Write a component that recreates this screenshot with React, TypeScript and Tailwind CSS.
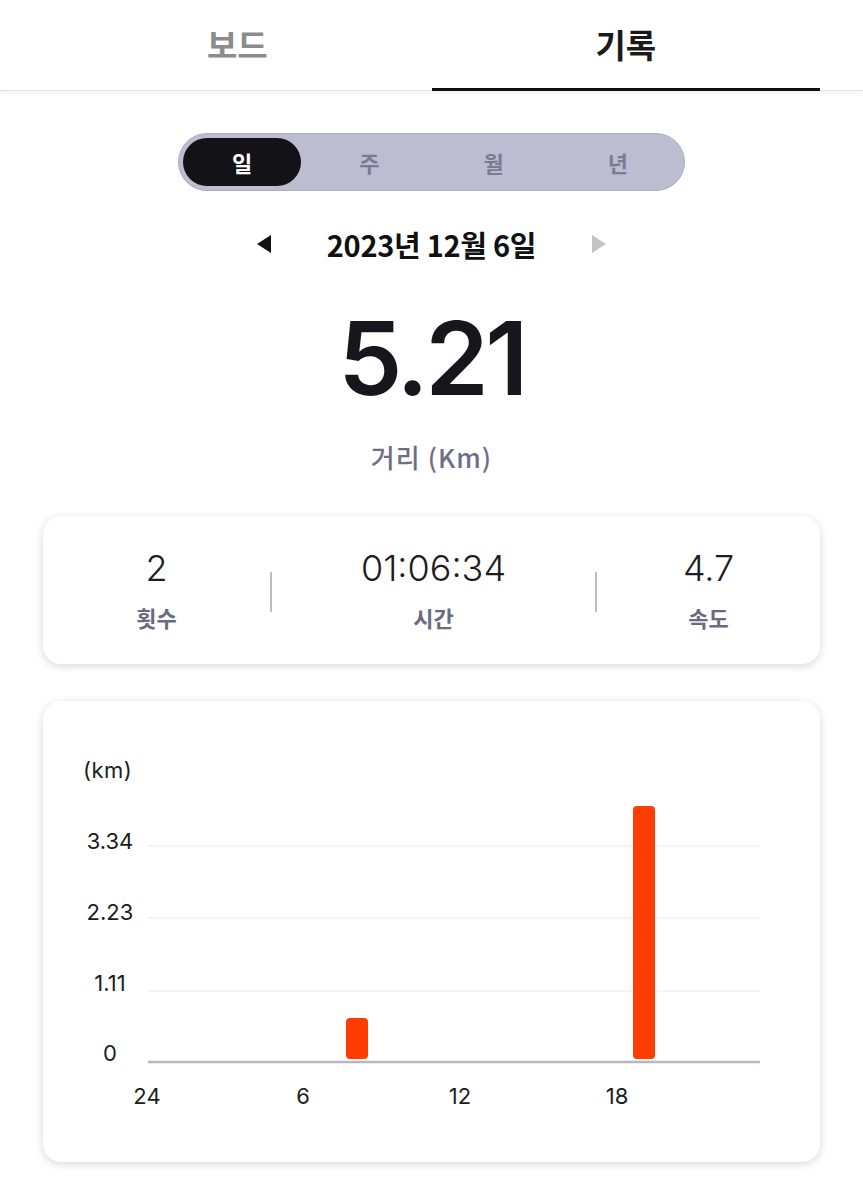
import React, { useState } from 'react';

const KR = { fontFamily: '"Noto Sans CJK KR", "Noto Sans", sans-serif' };

const periods = ['일', '주', '월', '년'];

const yTicks = [
  { label: '3.34', line: 145, base: 148 },
  { label: '2.23', line: 217, base: 219 },
  { label: '1.11', line: 290, base: 290 },
];

const xTicks = [
  { label: '24', x: 104 },
  { label: '6', x: 260 },
  { label: '12', x: 417 },
  { label: '18', x: 574 },
];

// bars: x offset within the card, top y (bottom sits on the baseline)
const bars = [
  { x: 303, top: 317 },
  { x: 590, top: 105 },
];

function Chart() {
  return (
    <svg width="777" height="461" viewBox="0 0 777 461" className="block">
      <text x="40" y="77" fontSize="22" fill="#1c1c22" fontFamily="Inter, sans-serif" letterSpacing="0.5">
        (km)
      </text>
      {yTicks.map((t) => (
        <g key={t.label}>
          <text x="67" y={t.base} textAnchor="middle" fontSize="22" fill="#1c1c22" fontFamily="Inter, sans-serif">
            {t.label}
          </text>
          <line x1="105" x2="717" y1={t.line} y2={t.line} stroke="#efeff2" strokeWidth="1.5" />
        </g>
      ))}
      <text x="67" y="360" textAnchor="middle" fontSize="22" fill="#1c1c22" fontFamily="Inter, sans-serif">
        0
      </text>
      {bars.map((b) => (
        <rect key={b.x} x={b.x} y={b.top} width="22" height={358 - b.top} rx="4" fill="#ff3d00" />
      ))}
      <line x1="105" x2="717" y1="361" y2="361" stroke="#b6b6c4" strokeWidth="2.5" />
      {xTicks.map((t) => (
        <text key={t.label} x={t.x} y="403" textAnchor="middle" fontSize="22" fill="#1c1c22" fontFamily="Inter, sans-serif">
          {t.label}
        </text>
      ))}
    </svg>
  );
}

function Stat({ value, label }: { value: string; label: string }) {
  return (
    <div className="flex flex-col items-center gap-[14px]">
      <span className="text-[36px] leading-[40px] font-light text-[#1c1c22]" style={{ fontFamily: 'Inter, sans-serif' }}>
        {value}
      </span>
      <span className="text-[22px] leading-[30px] font-bold text-[#6b6b80]" style={KR}>
        {label}
      </span>
    </div>
  );
}

export default function App() {
  const [tab, setTab] = useState(1);
  const [period, setPeriod] = useState(0);

  return (
    <div className="min-h-[1200px] w-[863px] bg-white flex flex-col" style={KR}>
      {/* Top tabs */}
      <div className="h-[91px] border-b border-[#e4e4e4] shadow-[0_2px_4px_rgba(0,0,0,0.05)] px-[43px] grid grid-cols-2">
        {['보드', '기록'].map((t, i) => (
          <button
            key={t}
            onClick={() => setTab(i)}
            className={`flex items-center justify-center pt-[2px] text-[33px] font-bold border-b-[3px] -mb-[1px] ${
              tab === i ? 'border-[#111111] text-[#1a1a1a]' : 'border-transparent text-[#8c8c8c]'
            }`}
          >
            {t}
          </button>
        ))}
      </div>

      {/* Period segmented control */}
      <div className="mt-[42px] mx-auto w-[507px] h-[58px] rounded-full bg-[#bdbdd1] border border-[#aeaec3] p-[4px] grid grid-cols-4">
        {periods.map((p, i) => (
          <button key={p} onClick={() => setPeriod(i)} className="flex items-center">
            {period === i ? (
              <span className="w-[118px] h-full rounded-full bg-[#121217] text-white text-[22px] font-bold flex items-center justify-center">
                {p}
              </span>
            ) : (
              <span className="w-full text-[22px] font-bold text-[#7b7b93] text-center">{p}</span>
            )}
          </button>
        ))}
      </div>

      {/* Date navigator */}
      <div className="mt-[35px] h-[36px] flex items-center justify-center gap-[55px]">
        <svg width="16" height="20" viewBox="0 0 16 20">
          <path d="M15 1 L1 10 L15 19 Z" fill="#111111" />
        </svg>
        <span className="text-[29px] leading-[36px] font-bold text-[#111111] tracking-[-0.01em]">2023년 12월 6일</span>
        <svg width="16" height="20" viewBox="0 0 16 20">
          <path d="M1 1 L15 10 L1 19 Z" fill="#c4c4c4" />
        </svg>
      </div>

      {/* Distance */}
      <div
        className="mt-[45px] text-center text-[102px] leading-none font-semibold text-[#16161c] tracking-[-0.035em]"
        style={{ fontFamily: 'Inter, sans-serif' }}
      >
        5.21
      </div>
      <div className="mt-[30px] text-center text-[26px] leading-[36px] font-medium text-[#6e6e86] tracking-[0.04em]">
        거리 (Km)
      </div>

      {/* Summary card */}
      <div className="mt-[41px] mx-[43px] h-[148px] rounded-[18px] bg-white shadow-[0_2px_8px_rgba(0,0,0,0.16)] grid grid-cols-[227px_2px_323px_2px_223px] items-center">
        <Stat value="2" label="횟수" />
        <div className="h-[40px] w-[2px] bg-[#bcbcc8] mt-[4px]" />
        <Stat value="01:06:34" label="시간" />
        <div className="h-[40px] w-[2px] bg-[#bcbcc8] mt-[4px]" />
        <Stat value="4.7" label="속도" />
      </div>

      {/* Chart card */}
      <div className="mt-[37px] mx-[43px] h-[461px] rounded-[18px] bg-white shadow-[0_2px_8px_rgba(0,0,0,0.16)] overflow-hidden">
        <Chart />
      </div>
    </div>
  );
}
